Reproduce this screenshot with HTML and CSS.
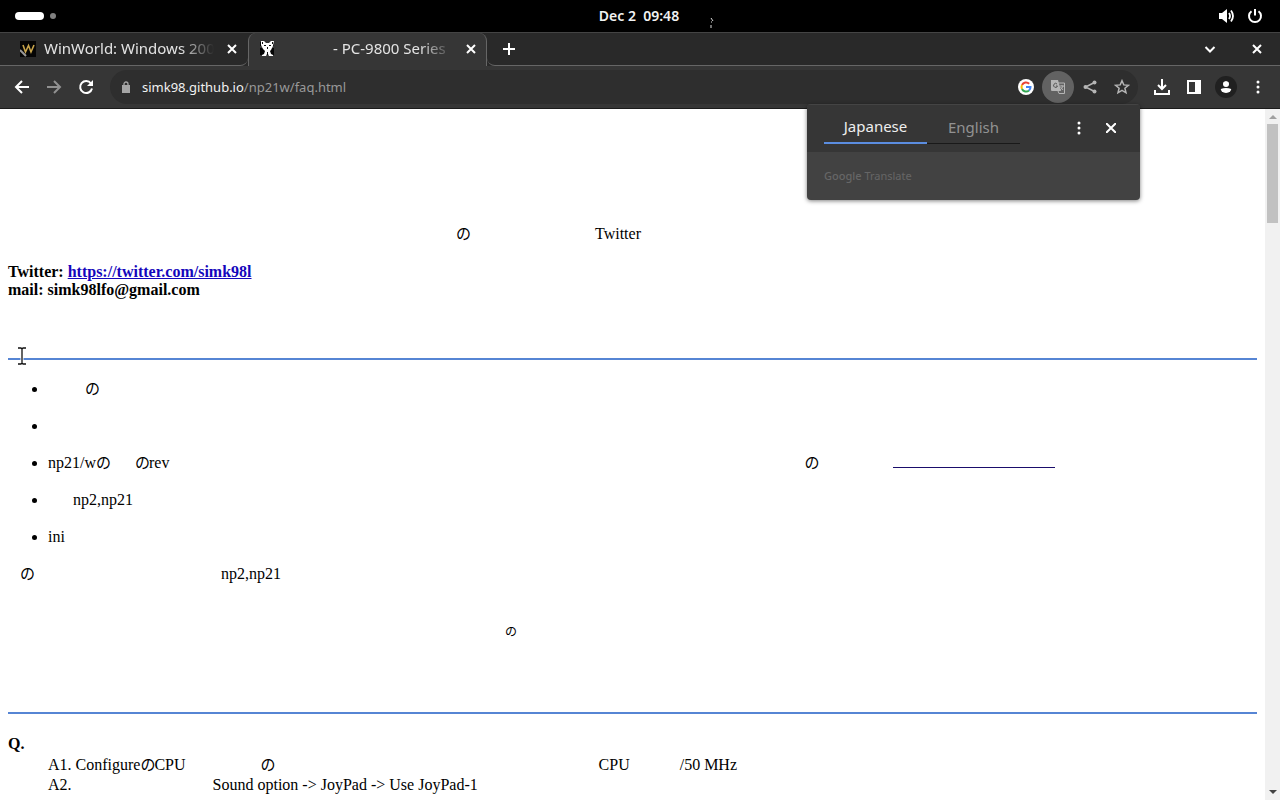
FILE: index.html
```html
<!DOCTYPE html>
<html lang="en">
<head>
<meta charset="utf-8">
<title>PC-9800 Series</title>
<link rel="stylesheet" href="styles.css">
</head>
<body>
<header class="system-bar">
  <div class="workspaces"><span class="pill"></span><span class="dot"></span></div>
  <time class="clock">Dec 2&nbsp; 09:48</time>
  <div class="system-icons">
    <svg width="18" height="16" viewBox="0 0 18 16"><path d="M1 5h3l5-4v14l-5-4H1z" fill="#fff"/><path d="M11 5q2 3 0 6M13 2.500q4 5.500 0 11" fill="none" stroke="#fff" stroke-width="1.800"/></svg>
    <svg width="16" height="16" viewBox="0 0 16 16" fill="none" stroke="#fff" stroke-width="2"><path d="M4.500 3.200a6 6 0 1 0 7 0M8 1v6.500"/></svg>
  </div>
  <svg class="marker" width="6" height="12" viewBox="0 0 6 12"><path d="M2 1l2 3M2 5h1M2 8v3" stroke="#ddd" fill="none"/></svg>
</header>

<nav class="tabs" aria-label="Tabs">
  <div class="tab">
    <svg width="16" height="16" viewBox="0 0 16 16"><path d="M0 0h16v16H0z" fill="#050505"/><path d="M3 4l2.500 7L8.500 4.500 11 11l3-7" fill="none" stroke="#c9a54b" stroke-width="1.600"/><path d="M0 9l6 6" stroke="#999" stroke-width="2"/></svg>
    <span class="tab-title">WinWorld: Windows 200</span>
    <button class="close" aria-label="Close tab"><svg width="10" height="10" viewBox="0 0 10 10"><path d="M1 1l8 8M9 1l-8 8"/></svg></button>
  </div>
  <div class="tab active">
    <svg width="16" height="16" viewBox="0 0 16 16"><path d="M1 1h3v4H1zM12 1h3v4h-3zM1 7h14v7H1z" fill="#050505"/><path d="M2 0h3l2 2h3l2-2h3l-1 5-2 4-1 1 1 3 2 1v1h-4l-1-2H8l-1 2H3v-1l2-1 1-3-2-2-2-4z" fill="#fff"/><path d="M5 4h2v1H5zM10 4h2v1h-2zM8 6h1v2H8zM8 11h1v2H8zM3 1h1v2H3zM13 1h1v2h-1z" fill="#111"/></svg>
    <span class="tab-title"><span class="gap g50"></span>- PC-9800 Series</span>
    <button class="close" aria-label="Close tab"><svg width="10" height="10" viewBox="0 0 10 10"><path d="M1 1l8 8M9 1l-8 8"/></svg></button>
  </div>
  <div class="strip">
    <button aria-label="New tab"><svg width="12" height="12" viewBox="0 0 12 12"><path d="M6 0v12M0 6h12"/></svg></button>
    <span class="spring"></span>
    <button class="search" aria-label="Search tabs"><svg width="12" height="12" viewBox="0 0 12 12"><path d="M1.500 4L6 8.500 10.500 4"/></svg></button>
    <button aria-label="Close window"><svg width="10" height="10" viewBox="0 0 10 10"><path d="M1 1l8 8M9 1l-8 8"/></svg></button>
  </div>
</nav>

<div class="toolbar">
  <button aria-label="Back"><svg width="16" height="16" viewBox="0 0 16 16"><path d="M15 8H2M8 2L2 8l6 6"/></svg></button>
  <button class="faded" aria-label="Forward"><svg width="16" height="16" viewBox="0 0 16 16"><path d="M1 8h13M8 2l6 6-6 6"/></svg></button>
  <button aria-label="Reload"><svg width="16" height="16" viewBox="0 0 16 16"><path d="M13 4.500A6 6 0 1 0 14 9.500"/><path d="M15 1v6H9z" fill="#fff" stroke="none"/></svg></button>
  <div class="address">
    <svg class="lock" width="10" height="12" viewBox="0 0 10 12"><path d="M1 4h8v8H1z" fill="#a5a5a5"/><path d="M3 4V3a2 2 0 0 1 4 0v1" fill="none" stroke="#a5a5a5" stroke-width="1.300"/></svg>
    <a class="url" href="#">simk98.github.io<span>/np21w/faq.html</span></a>
    <button aria-label="Google"><svg width="16" height="16" viewBox="0 0 16 16"><circle cx="8" cy="8" r="8" fill="#fff" stroke="none"/><path d="M4 6a4.500 4.500 0 0 1 7.200-1.300" stroke="#ea4335"/><path d="M4 6a4.500 4.500 0 0 0 0 4" stroke="#fbbc05"/><path d="M4 10a4.500 4.500 0 0 0 7 1.500" stroke="#34a853"/><path d="M8 8h4.500a4.500 4.500 0 0 1-1.500 3.500" stroke="#4285f4"/></svg></button>
    <button class="translate" aria-label="Translate this page"><svg width="14" height="14" viewBox="0 0 14 14"><path d="M0 0h7l3 11H1q-1 0-1-1z" fill="#b5b5b5" stroke="none"/><path d="M7 3h6.500v10.500H8L7 11" stroke="#b5b5b5" stroke-width="1"/><path d="M6 4a2 2 0 1 0 .5 2H5" stroke="#555" stroke-width="1"/><path d="M8.500 6H13M11 5v1M12 6q-1 3-3 4M9.500 7l2.500 3" stroke="#b5b5b5" stroke-width="1"/></svg></button>
    <button aria-label="Share"><svg class="muted" width="14" height="14" viewBox="0 0 14 14"><path d="M11.500 2.500L2.500 7l9 4.500" stroke-width="1.500"/><g stroke="none" fill="#b5b5b5"><circle cx="11.500" cy="2.500" r="2"/><circle cx="2.500" cy="7" r="2"/><circle cx="11.500" cy="11.500" r="2"/></g></svg></button>
    <button aria-label="Bookmark"><svg class="muted" width="16" height="16" viewBox="0 0 16 16"><path d="M8 1.700l1.800 4.200 4.600.4-3.500 3 1.100 4.500L8 11.400l-4 2.400 1.100-4.500-3.500-3 4.600-.4z"/></svg></button>
  </div>
  <div class="actions">
    <button aria-label="Downloads"><svg width="16" height="16" viewBox="0 0 16 16"><path d="M8 0v9M4 6l4 4 4-4M1 11v4h14v-4"/></svg></button>
    <button aria-label="Side panel"><svg width="14" height="14" viewBox="0 0 14 14"><path d="M1 1h12v12H1z"/><path d="M9 1h4v12H9z" fill="#fff"/></svg></button>
    <button class="profile" aria-label="Profile"><svg width="12" height="12" viewBox="0 0 12 12"><g fill="#fff" stroke="none"><circle cx="6" cy="3" r="3"/><path d="M0 12v-2q0-3 6-3t6 3v2z"/></g></svg></button>
    <button aria-label="Menu"><svg width="4" height="14" viewBox="0 0 4 14"><g fill="#fff" stroke="none"><circle cx="2" cy="2" r="1.500"/><circle cx="2" cy="7" r="1.500"/><circle cx="2" cy="12" r="1.500"/></g></svg></button>
  </div>
  <section class="popup" aria-label="Translate">
    <div class="popup-head">
      <button class="lang selected">Japanese</button>
      <button class="lang">English</button>
      <span class="spring"></span>
      <button class="option" aria-label="Options"><svg width="4" height="14" viewBox="0 0 4 14"><g fill="#fff" stroke="none"><circle cx="2" cy="2" r="1.500"/><circle cx="2" cy="7" r="1.500"/><circle cx="2" cy="12" r="1.500"/></g></svg></button>
      <button class="option" aria-label="Close"><svg width="10" height="10" viewBox="0 0 10 10"><path d="M0 0l10 10M10 0L0 10"/></svg></button>
    </div>
    <div class="popup-foot"><b>Google</b> Translate</div>
  </section>
</div>

<div class="viewport">
  <main class="page">
    <p class="intro"><span class="gap g448"></span><i>の</i><span class="gap g125"></span>Twitter</p>
    <p class="contact">Twitter: <a href="#">https://twitter.com/simk98l</a><br>mail: simk98lfo@gmail.com</p>
    <hr>
    <ul>
      <li><span class="gap g37"></span><i>の</i></li>
      <li>&nbsp;</li>
      <li>np21/w<i>の</i><span class="gap g25"></span><i>の</i>rev<span class="gap g635"></span><i>の</i><span class="gap g75"></span><a href="#" aria-label="Download" class="gap g162"></a></li>
      <li><span class="gap g25"></span>np2,np21</li>
      <li>ini</li>
    </ul>
    <p class="note"><span class="gap g12"></span><i>の</i><span class="gap g187"></span>np2,np21</p>
    <p class="small"><span class="gap g497"></span><i>の</i></p>
    <hr>
    <dl>
      <dt>Q.</dt>
      <dd>A1. Configure<i>の</i>CPU<span class="gap g75"></span><i>の</i><span class="gap g324"></span>CPU<span class="gap g50"></span>/50 MHz</dd>
      <dd>A2.<span class="gap g141"></span>Sound option -&gt; JoyPad -&gt; Use JoyPad-1</dd>
    </dl>
    <svg class="cursor" width="10" height="18" viewBox="0 0 10 18" fill="none"><path d="M1 1h3l1 1 1-1h3M5 2v14M1 17h3l1-1 1 1h3" stroke="#fff" stroke-width="3"/><path d="M1 1h3l1 1 1-1h3M5 2v14M1 17h3l1-1 1 1h3" stroke="#111" stroke-width="1.300"/></svg>
  </main>
  <div class="scrollbar">
    <svg width="8" height="4" viewBox="0 0 8 4"><path d="M0 4l4-4 4 4z" fill="#a0a0a0"/></svg>
    <div class="track"><div class="thumb"></div></div>
    <svg width="8" height="4" viewBox="0 0 8 4"><path d="M0 0l4 4 4-4z" fill="#444"/></svg>
  </div>
</div>
</body>
</html>
```

FILE: styles.css
```css
* { box-sizing: border-box; }
body {
  margin: 0;
  height: 100vh;
  overflow: hidden;
  display: flex;
  flex-direction: column;
  background: #fff;
  font-family: "Noto Sans", sans-serif;
  font-size: 15px;
}
button {
  display: flex;
  align-items: center;
  justify-content: center;
  flex: none;
  width: 32px;
  height: 32px;
  padding: 0;
  border: 0;
  background: none;
  color: inherit;
  font: inherit;
}
button svg { fill: none; stroke: #fff; stroke-width: 2; }
svg { flex: none; }
.spring { flex: 1; }

.system-bar {
  position: relative;
  flex: none;
  height: 32px;
  padding: 0 17px 2px 15px;
  display: grid;
  grid-template-columns: 1fr auto 1fr;
  align-items: center;
  background: #000;
  color: #f2f2f2;
}
.workspaces { display: flex; align-items: center; gap: 6px; padding-top: 2px; }
.pill { width: 29px; height: 8px; border-radius: 4px; background: #fff; }
.dot { width: 6px; height: 6px; border-radius: 50%; background: #808080; }
.clock { font-size: 14px; font-weight: 600; }
.system-icons { display: flex; justify-content: flex-end; gap: 11px; padding-top: 2px; }
.marker { position: absolute; left: 709px; top: 17px; }

.tabs {
  flex: none;
  height: 34px;
  display: flex;
  background: #292929;
  color: #e4e4e4;
  border-top: 1px solid #444;
}
.tab {
  display: flex;
  align-items: center;
  width: 248px;
  padding: 0 6px 0 20px;
  gap: 8px;
  border-bottom: 1px solid #666;
  border-bottom-right-radius: 8px;
}
.tab.active {
  width: 239px;
  padding: 0 5px 1px 10px;
  background: #363636;
  border: 1px solid #666;
  border-top: 0;
  border-bottom: 0;
  border-radius: 8px 8px 0 0;
}
.tab-title {
  flex: 1;
  min-width: 0;
  overflow: hidden;
  white-space: nowrap;
  line-height: 20px;
  padding-bottom: 2px;
  mask-image: linear-gradient(90deg, #000 80%, transparent);
}
.close { width: 20px; }
.strip {
  flex: 1;
  display: flex;
  align-items: center;
  padding: 0 7px 0 6px;
  border-bottom: 1px solid #666;
  border-bottom-left-radius: 8px;
}
.search { margin-right: 15px; }

.toolbar {
  position: relative;
  flex: none;
  height: 43px;
  padding: 0 6px;
  display: flex;
  align-items: center;
  background: #363636;
  border-bottom: 1px solid #1b1b1b;
}
.faded { opacity: .45; }
.address {
  flex: 1;
  min-width: 0;
  height: 34px;
  margin-left: 8px;
  padding: 0 0 0 11px;
  display: flex;
  align-items: center;
  border-radius: 17px;
  background: #2e2e2e;
}
.url { flex: 1; margin-left: 11px; color: #f2f2f2; text-decoration: none; font-size: 13px; }
.url span { color: #999; }
.translate { border-radius: 50%; background: #626262; }
button .muted { stroke: #b5b5b5; stroke-width: 1.5; }
.actions { display: flex; margin-left: 8px; }
.profile svg { box-sizing: content-box; padding: 5px; border-radius: 50%; background: #202020; }

.popup {
  position: absolute;
  z-index: 2;
  top: 38px;
  right: 140px;
  width: 333px;
  color: #eee;
  background: #424242;
  border-radius: 4px;
  overflow: hidden;
  box-shadow: 0 1px 4px rgba(0, 0, 0, .5);
}
.popup-head {
  display: flex;
  height: 48px;
  padding: 0 13px 8px 17px;
  align-items: center;
  background: #363636;
  border-top: 1px solid #444;
}
.lang {
  width: 93px;
  height: 39px;
  padding-top: 5px;
  color: #929292;
  font-size: 15px;
  border-bottom: 1px solid #191919;
}
.lang.selected { width: 103px; color: #eee; border-bottom: 2px solid #5b8de0; }
.option { height: 39px; padding-top: 7px; }
.popup-foot { height: 48px; padding: 16px 17px; color: #666; font-size: 11px; line-height: 16px; }
.popup-foot b { font-weight: 500; }

.viewport { flex: 1; min-height: 0; display: flex; }
.page {
  position: relative;
  flex: 1;
  min-width: 0;
  overflow: hidden;
  padding: 115px 8px 0;
  color: #000;
  font-family: "Liberation Serif", "Noto Sans CJK JP", serif;
  font-size: 16px;
  line-height: 20px;
}
.page p, .page ul, .page dl { margin: 0; }
.page i {
  display: inline-block;
  width: 14px;
  font: 400 15px/16px "Noto Sans CJK JP", sans-serif;
}
.page a { color: #1406bc; }
.gap { display: inline-block; }
.g12 { width: 12px; }
.g25 { width: 25px; }
.g37 { width: 37px; }
.g50 { width: 50px; }
.g75 { width: 75px; }
.g125 { width: 125px; }
.g141 { width: 141px; }
.page .g162 { width: 162px; height: 6px; vertical-align: bottom; border-top: 1px solid #1a0d6b; }
.g187 { width: 187px; }
.g324 { width: 324px; }
.g448 { width: 448px; }
.g497 { width: 497px; }
.g635 { width: 635px; }
.page .contact { margin: 19px 0 59px; font-weight: bold; line-height: 18px; }
.page hr { margin: 0; border: 0; height: 2px; background: #5685d4; }
.page ul { padding: 19px 0 0 40px; }
.page li { height: 20px; margin-bottom: 17px; white-space: nowrap; }
.page .small { margin: 37px 0 71px; }
.page .small i { font-size: 12px; }
.page dl { padding-top: 20px; }
.page dt { margin-bottom: 1px; font-weight: bold; }
.page dd { margin-left: 40px; white-space: nowrap; }
.cursor { position: absolute; left: 17px; top: 238px; }

.scrollbar {
  flex: none;
  width: 15px;
  padding: 6px 0;
  display: flex;
  flex-direction: column;
  align-items: center;
  gap: 5px;
  background: #f1f1f1;
}
.track { flex: 1; width: 11px; }
.thumb { height: 15%; background: #c1c1c1; }
```
